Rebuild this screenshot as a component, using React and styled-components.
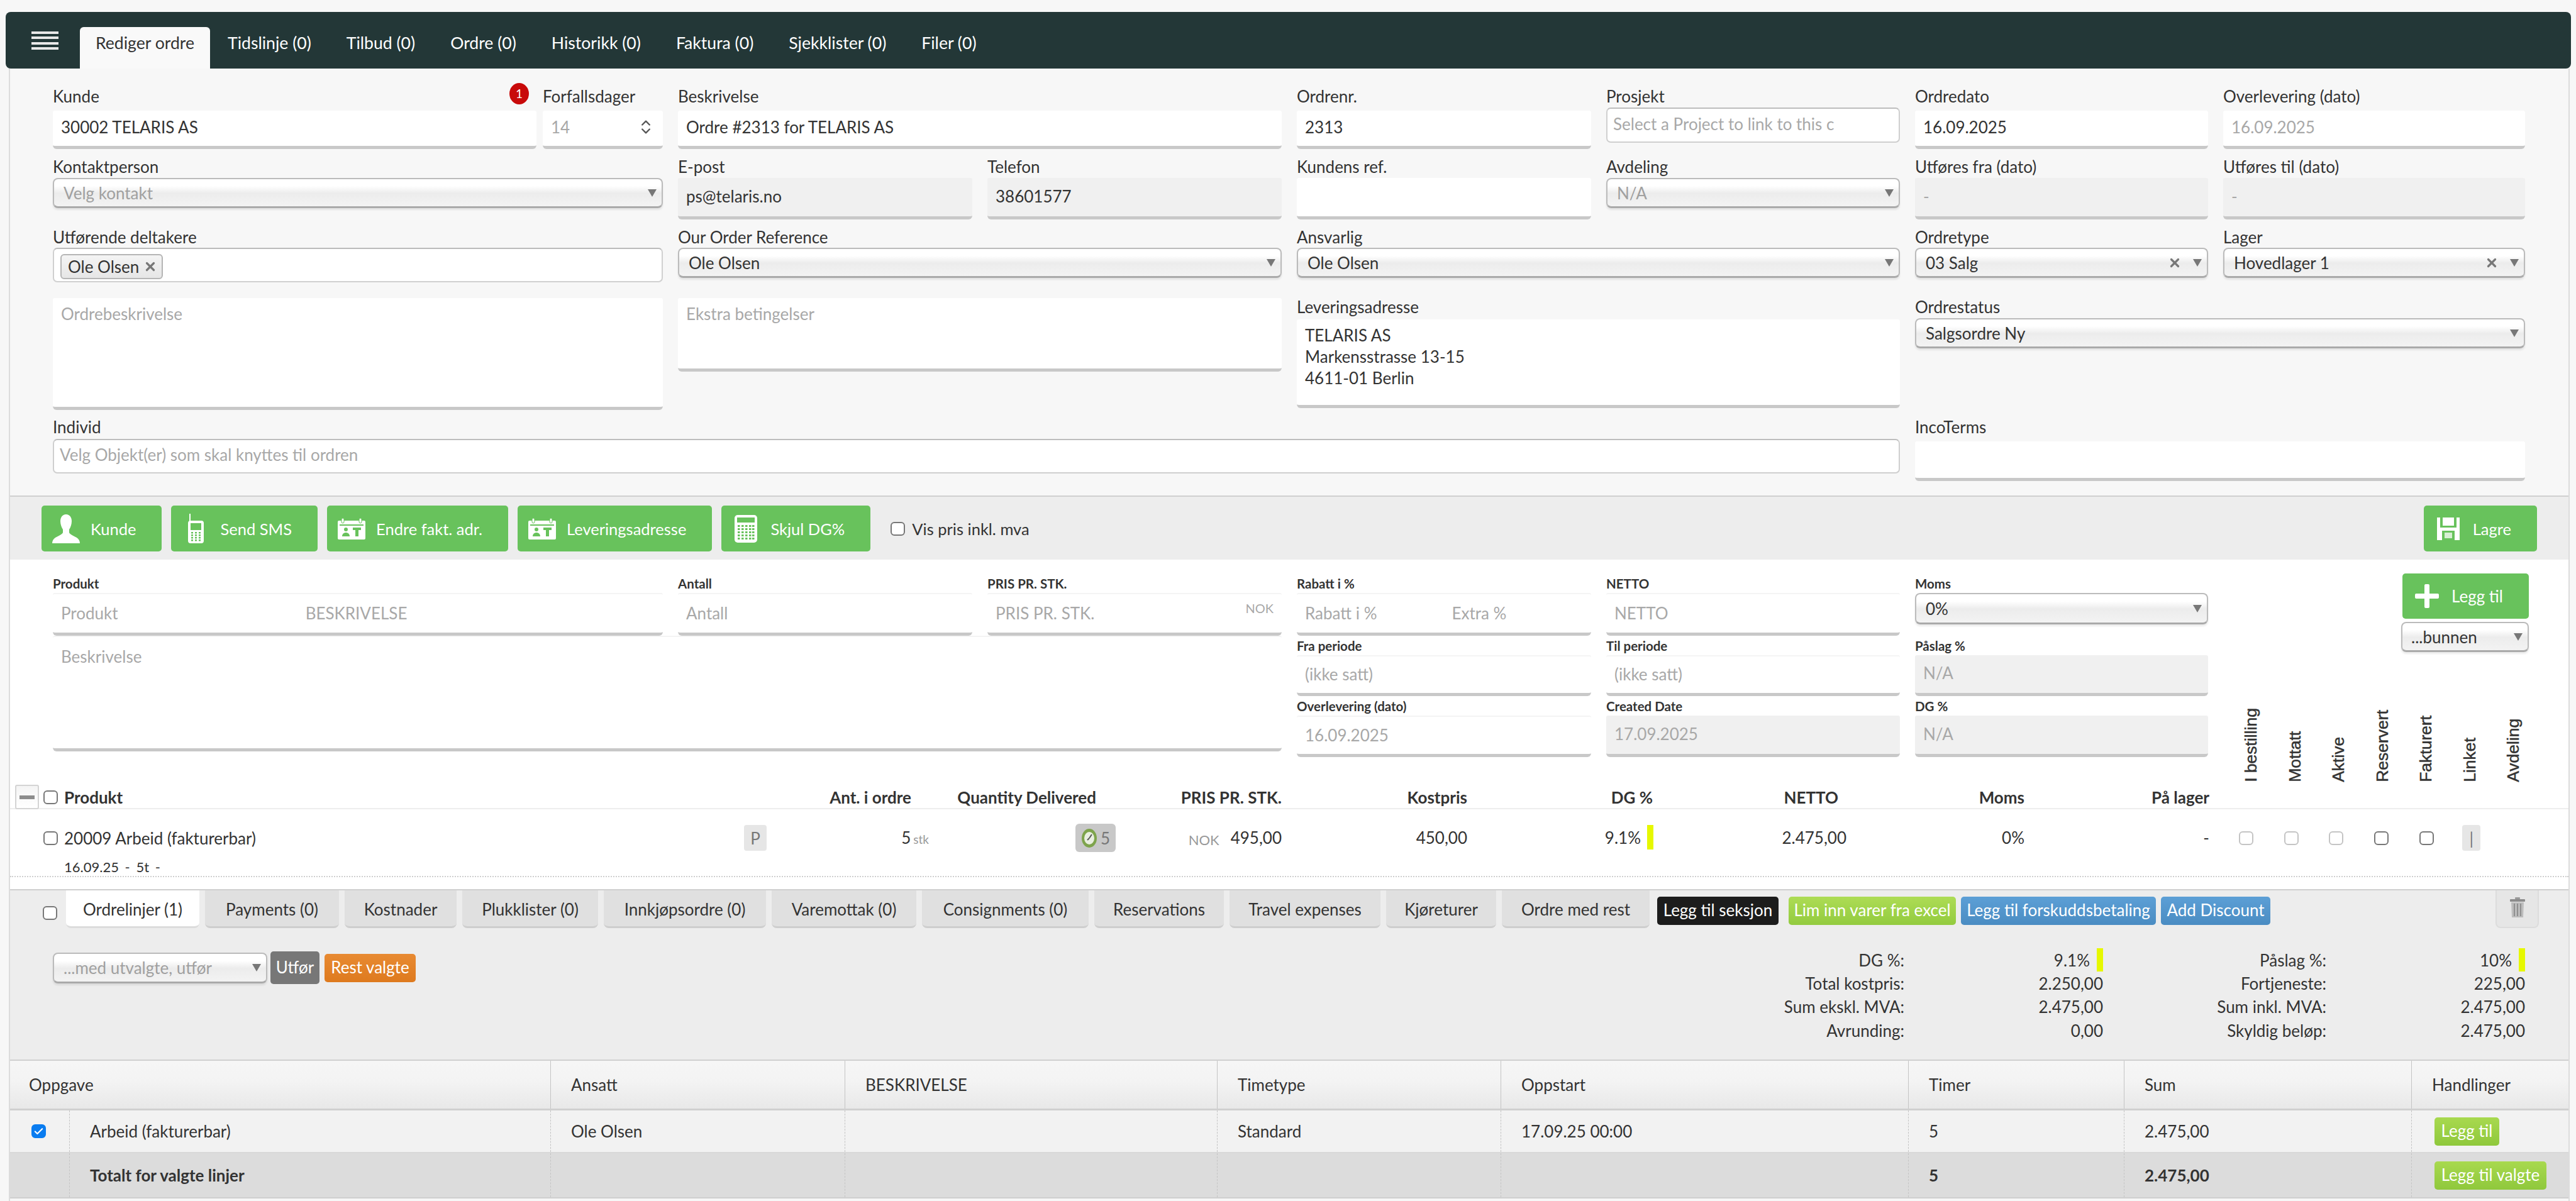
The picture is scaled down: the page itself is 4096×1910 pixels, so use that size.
import React from "react";
import styled, { createGlobalStyle } from "styled-components";
import { ChevronsUpDown, X, Check } from "lucide-react";

const GlobalStyle = createGlobalStyle`
  html, body {
    margin: 0;
    padding: 0;
    width: 4096px;
    height: 1910px;
    overflow: hidden;
    background: #f7f7f7;
    color: #333;
    font-family: Lato, "Open Sans", sans-serif;
    font-size: 26px;
  }
  * { box-sizing: border-box; }
`;

const COLUMNS = "473px 473px 468px 468px 468px 467px 466px 480px";
const GREEN = "#68c25c";

const Page = styled.div`
  width: 4096px;
  height: 1910px;
  padding-top: 19px;
  display: flex;
  flex-direction: column;
`;

/* top bar */
const TopBar = styled.div`
  margin: 0 8px 0 9px;
  height: 90px;
  background: #233737;
  border-radius: 8px;
  display: flex;
  align-items: flex-end;
  padding-left: 41px;
  position: relative;
  z-index: 1;
`;
const Burger = styled.div`
  width: 43px;
  height: 29px;
  margin: 0 34px 30px 0;
  display: flex;
  flex-direction: column;
  justify-content: space-between;
  span {
    display: block;
    height: 4px;
    background: #e8e8e8;
  }
`;
const TopTab = styled.div`
  height: 66px;
  line-height: 50px;
  font-size: 26.6px;
  padding: 0 ${(p) => (p.$active ? "25px" : "28px")};
  color: ${(p) => (p.$active ? "#333" : "#fff")};
  background: ${(p) => (p.$active ? "#f9f9f9" : "transparent")};
  border-radius: 6px 6px 0 0;
  white-space: nowrap;
`;

const Body = styled.div`
  margin: 0 10px 0 14px;
  flex: 1;
  border-left: 2px solid #dcdcdc;
  border-right: 2px solid #dcdcdc;
  display: flex;
  flex-direction: column;
`;

/* order form */
const FormGrid = styled.div`
  height: 681px;
  padding: 32px 0 0 68px;
  border-bottom: 2px solid #cfcfcf;
  display: grid;
  grid-template-columns: ${COLUMNS};
  grid-template-rows: 112px 112px 109px 193px 98px;
  column-gap: 24px;
`;
const Field = styled.div`
  grid-column: span ${(p) => p.$span || 1};
  display: flex;
  flex-direction: column;
  align-items: stretch;
  min-width: 0;
`;
const Label = styled.div`
  height: 24px;
  line-height: 24px;
  margin-bottom: ${(p) => p.$gap ?? 6}px;
  white-space: nowrap;
  display: flex;
  justify-content: space-between;
`;
const Badge = styled.span`
  width: 31px;
  height: 34px;
  margin: -9px 12px 0 0;
  border-radius: 50%;
  background: #c80a0a;
  color: #fff;
  font-size: 19px;
  line-height: 34px;
  text-align: center;
`;
const Input = styled.div`
  height: ${(p) => p.$h || 61}px;
  padding: 0 13px;
  line-height: ${(p) => (p.$h || 61) - 8}px;
  background: ${(p) => (p.$disabled ? "#f0f0f0" : "#fff")};
  color: ${(p) => (p.$muted ? "#a8a8a8" : "#333")};
  border-top: ${(p) => (p.$line ? "2px solid #f4f4f4" : "0")};
  border-bottom: 5px solid #c8c8c8;
  border-radius: 3px 3px 6px 6px;
  display: flex;
  justify-content: space-between;
  white-space: nowrap;
  position: relative;
`;
const TextArea = styled(Input)`
  height: ${(p) => p.$h}px;
  display: block;
  padding-top: 8px;
  line-height: 34px;
`;
const Outline = styled.div`
  height: ${(p) => p.$h || 56}px;
  line-height: ${(p) => (p.$h || 56) - 8}px;
  padding: 0 9px;
  background: #fff;
  color: #a8a8a8;
  border: 2px solid #cfcfcf;
  border-top-color: #bdbdbd;
  border-radius: 7px;
  white-space: nowrap;
  overflow: hidden;
`;
const Pair = styled.div`
  grid-column: span 2;
  display: flex;
  gap: 10px;
`;
const Select = styled.div`
  height: ${(p) => p.$h || 48}px;
  padding: 0 8px 0 15px;
  background: linear-gradient(#fff 0%, #fff 25%, #ececec 52%, #f3f3f3 100%);
  border: 2px solid #bbb;
  border-bottom: 3px solid #aaa;
  border-radius: 8px;
  box-shadow: 0 3px 3px rgba(0, 0, 0, 0.08);
  color: ${(p) => (p.$muted ? "#a0a0a0" : "#333")};
  display: flex;
  align-items: center;
  gap: 18px;
  white-space: nowrap;
  span:first-child {
    flex: 1;
  }
`;
const Arrow = styled.i`
  width: 0;
  height: 0;
  border-left: 7px solid transparent;
  border-right: 7px solid transparent;
  border-top: 12px solid #777;
  flex: none;
`;
const MultiBox = styled.div`
  height: 55px;
  padding: 8px 10px;
  background: #fff;
  border: 2px solid #d0d0d0;
  border-top-color: #bbb;
  border-radius: 7px;
`;
const Chip = styled.div`
  width: 163px;
  height: 40px;
  padding: 0 7px 0 10px;
  background: linear-gradient(#f4f4f4, #e6e6e6);
  border: 2px solid #b5b5b5;
  border-radius: 6px;
  display: flex;
  align-items: center;
  justify-content: space-between;
`;

/* green toolbar */
const Toolbar = styled.div`
  height: 100px;
  padding: 14px 50px 0 50px;
  background: #ededed;
  display: flex;
  gap: 15px;
  font-size: 25.5px;
`;
const GreenButton = styled.div`
  height: 73px;
  padding: 0 41px 0 17px;
  background: ${GREEN};
  border-radius: 5px;
  color: #fff;
  display: flex;
  align-items: center;
  gap: 17px;
  white-space: nowrap;
  flex: none;
`;
const IconBox = styled.div`
  width: 44px;
  display: flex;
  justify-content: center;
  flex: none;
`;
const CheckBox = styled.span`
  width: 23px;
  height: 22px;
  flex: none;
  display: inline-flex;
  align-items: center;
  justify-content: center;
  border: 2px solid ${(p) => (p.$on ? "#0a7cf0" : p.$light ? "#c4c4c4" : "#777")};
  border-radius: 6px;
  background: ${(p) => (p.$on ? "#0a7cf0" : "#fff")};
`;
const VatToggle = styled.div`
  margin-left: 17px;
  height: 73px;
  display: flex;
  align-items: center;
  gap: 11px;
  white-space: nowrap;
`;
const Push = styled.div`
  flex: 1;
`;

/* product entry */
const ProductSection = styled.div`
  flex: none;
  height: 524px;
  background: #fff;
  display: flex;
  flex-direction: column;
`;
const ProductGrid = styled.div`
  height: 358px;
  padding: 26px 0 4px 68px;
  display: grid;
  grid-template-columns: ${COLUMNS};
  grid-template-rows: 95px 92px 93px 36px;
  column-gap: 24px;
  row-gap: 4px;
`;
const SmallLabel = styled.div`
  height: 24px;
  margin-bottom: 3px;
  line-height: 24px;
  font-size: 20.5px;
  font-weight: 700;
  white-space: nowrap;
`;
const DescArea = styled(Input)`
  grid-column: 1 / span 4;
  grid-row: 2 / span 2;
  height: 184px;
  margin-top: -4px;
  padding-top: 14px;
  display: block;
  line-height: 34px;
`;
const SideCol = styled.div`
  grid-column: 8;
  grid-row: 1 / -1;
  margin-top: -4px;
  display: flex;
  flex-direction: column;
  align-items: flex-end;
`;
const SideSelect = styled(Select)`
  width: 203px;
  margin: 5px -6px 0 0;
  padding-left: 14px;
`;
const AddButton = styled(GreenButton)`
  margin-right: -6px;
  height: 72px;
`;
const RotatedRow = styled.div`
  margin-top: auto;
  align-self: stretch;
  margin-left: 9px;
  display: flex;
`;
const Rotated = styled.div`
  width: 69.5px;
  writing-mode: vertical-rl;
  transform: rotate(180deg);
  display: flex;
  align-items: center;
  justify-content: flex-start;
  font-family: "Liberation Sans", Arial, sans-serif;
  font-size: 26.5px;
  font-weight: 400;
  -webkit-text-stroke: 0.5px #333;
  line-height: 1;
  white-space: nowrap;
`;
const ProdSmall = styled.span`
  font-size: 20px;
`;
const Spread = styled.span`
  width: ${(p) => p.$w}px;
  display: inline-block;
`;

/* product lines */
const LineGrid = styled.div`
  display: grid;
  grid-template-columns: 1203px 262px 293px 264px 295px 296px 307px 283px 294px 1fr;
  height: ${(p) => p.$h}px;
  border-bottom: ${(p) => p.$border};
  font-weight: ${(p) => p.$weight || 400};
  flex: none;
`;
const LineCell = styled.div`
  display: flex;
  align-items: ${(p) => p.$align || "center"};
  justify-content: flex-end;
  padding-right: ${(p) => p.$pr || 0}px;
  padding-top: ${(p) => p.$pt || 0}px;
  gap: ${(p) => p.$gap || 0}px;
  white-space: nowrap;
`;
const LineHead = styled.div`
  display: flex;
  align-items: center;
  padding-left: 8px;
  gap: 7px;
`;
const Minus = styled.div`
  width: 38px;
  height: 39px;
  background: linear-gradient(#f4f4f4, #fff);
  border: 2px solid #d4d4d4;
  border-radius: 3px;
  display: flex;
  align-items: center;
  justify-content: center;
  &::after {
    content: "";
    width: 24px;
    height: 6px;
    background: #8c8c8c;
  }
`;
const LineMain = styled.div`
  padding: 25px 0 0 53px;
`;
const LineTop = styled.div`
  height: 41px;
  display: flex;
  align-items: center;
  gap: 10px;
`;
const GreyTag = styled.div`
  width: ${(p) => p.$w || 36}px;
  height: 41px;
  background: #e6e6e6;
  border-radius: 4px;
  color: #777;
  display: flex;
  align-items: center;
  justify-content: center;
  flex: none;
`;
const SubLine = styled.div`
  margin: 12px 0 0 33px;
  font-size: 22px;
  word-spacing: 4px;
`;
const Unit = styled.span`
  font-size: ${(p) => p.$size || 19}px;
  color: #999;
`;
const Delivered = styled.div`
  width: 64px;
  height: 45px;
  background: #c8c8c8;
  border-radius: 6px;
  color: #777;
  display: flex;
  align-items: center;
  justify-content: center;
  gap: 5px;
`;
const YellowBar = styled.i`
  width: 10px;
  height: ${(p) => p.$h || 39}px;
  background: #e6f800;
  flex: none;
`;
const CheckRow = styled.div`
  grid-column: 10;
  margin-left: 23px;
  display: flex;
  align-items: flex-start;
  padding-top: 25px;
`;
const CheckSlot = styled.div`
  width: 71.6px;
  height: 41px;
  display: flex;
  align-items: center;
  justify-content: center;
`;

/* lower panel */
const Lower = styled.div`
  flex: none;
  height: 271px;
  background: #ededed;
  border-top: 2px solid #cfcfcf;
  display: flex;
  flex-direction: column;
`;
const TabRow = styled.div`
  height: 60px;
  padding: 0 47px 0 52px;
  display: flex;
  align-items: flex-start;
  flex: none;
`;
const TabCheck = styled.div`
  width: 37px;
  padding-top: 21px;
`;
const Tab = styled.div`
  width: ${(p) => p.$w}px;
  height: 60px;
  margin-right: 9px;
  line-height: 60px;
  font-size: 26px;
  text-align: center;
  background: ${(p) => (p.$active ? "#fff" : "#e0e0e0")};
  border-bottom: 3px solid ${(p) => (p.$active ? "#dcdcdc" : "#cecece")};
  border-radius: 0 0 8px 8px;
  white-space: nowrap;
  flex: none;
`;
const FlatButton = styled.div`
  width: ${(p) => (p.$w ? `${p.$w}px` : "auto")};
  height: ${(p) => p.$h || 45}px;
  padding: 0 ${(p) => p.$px ?? 0}px;
  margin: ${(p) => p.$m || "0"};
  line-height: ${(p) => (p.$h || 45) - 2}px;
  text-align: center;
  background: ${(p) => p.$bg};
  color: #fff;
  border-radius: 5px;
  white-space: nowrap;
  flex: none;
`;
const TrashBox = styled.div`
  width: 69px;
  height: 60px;
  margin-left: auto;
  background: #e6e6e6;
  border: 2px solid #dcdcdc;
  border-top: 0;
  border-radius: 0 0 8px 8px;
  display: flex;
  justify-content: center;
  padding-top: 11px;
  flex: none;
`;
const ActionArea = styled.div`
  flex: 1;
  padding: 32px 69px 0 68px;
  display: flex;
  justify-content: space-between;
  align-items: flex-start;
`;
const ActionLeft = styled.div`
  display: flex;
  align-items: center;
  gap: 5px;
  margin-top: 5px;
`;
const Summary = styled.div`
  display: grid;
  grid-template-columns: 300px 316px 355px 316px;
  grid-auto-rows: 37.4px;
  align-items: center;
`;
const SumCell = styled.div`
  display: flex;
  justify-content: flex-end;
  align-items: center;
  gap: 11px;
  white-space: nowrap;
`;

/* time table */
const TimeRow = styled.div`
  display: grid;
  grid-template-columns: 95px 765px 468px 592px 451px 648px 343px 457px 1fr;
  height: ${(p) => p.$h}px;
  flex: none;
  background: ${(p) => p.$bg};
  border-top: ${(p) => p.$top || "0"};
  border-bottom: ${(p) => p.$bottom};
  font-weight: ${(p) => p.$weight || 400};
`;
const TimeCell = styled.div`
  grid-column: span ${(p) => p.$span || 1};
  display: flex;
  align-items: center;
  padding-left: ${(p) => p.$pl ?? 32}px;
  border-right: 1px ${(p) => p.$line || "dashed"} #c4c4c4;
  white-space: nowrap;
  &:last-child {
    border-right: 0;
  }
`;

const PersonIcon = () => (
  <svg width="44" height="46" viewBox="0 0 44 46" fill="#fff">
    <path d="M22 0c6 0 9 5 9 11 0 5-2 10-4 13v5c1 3 7 5 12 8 3 2 5 5 5 9H0c0-4 2-7 5-9 5-3 11-5 12-8v-5c-2-3-4-8-4-13 0-6 3-11 9-11z" />
  </svg>
);

const PhoneIcon = () => (
  <svg width="25" height="47" viewBox="0 0 25 47">
    <rect x="2" y="0" width="2" height="14" fill="#fff" />
    <rect x="0" y="11" width="25" height="36" rx="4" fill="#fff" />
    <rect x="4" y="15" width="17" height="11" fill={GREEN} />
    {[29, 33, 37, 41].map((y) =>
      [5, 11, 17].map((x) => <rect key={`${x}-${y}`} x={x} y={y} width="3" height="2.5" fill={GREEN} />)
    )}
  </svg>
);

const CalendarIcon = () => (
  <svg width="44" height="34" viewBox="0 0 44 34">
    <rect x="0" y="4" width="44" height="30" rx="2" fill="#fff" />
    <rect x="6" y="0" width="4" height="8" rx="2" fill="#fff" stroke={GREEN} />
    <rect x="34" y="0" width="4" height="8" rx="2" fill="#fff" stroke={GREEN} />
    <rect x="3" y="10" width="38" height="2" fill={GREEN} />
    <circle cx="13" cy="18" r="3" fill={GREEN} />
    <path d="M7 29c0-4 3-6 6-6s6 2 6 6z" fill={GREEN} />
    <rect x="24" y="15" width="13" height="4" fill={GREEN} />
    <rect x="28" y="19" width="5" height="10" fill={GREEN} />
  </svg>
);

const CalculatorIcon = () => (
  <svg width="36" height="44" viewBox="0 0 36 44">
    <rect x="0" y="0" width="36" height="44" rx="5" fill="#fff" />
    <rect x="4" y="4" width="28" height="8" fill={GREEN} />
    {[16, 21, 26, 31, 36].map((y) =>
      [5, 11, 17, 23, 28].map((x) => <rect key={`${x}-${y}`} x={x} y={y} width="3.5" height="3" fill={GREEN} />)
    )}
  </svg>
);

const FloppyIcon = () => (
  <svg width="36" height="36" viewBox="0 0 36 36">
    <path d="M0 0h36v36H0z" fill="#fff" />
    <rect x="5" y="0" width="4" height="13" fill={GREEN} />
    <rect x="27" y="0" width="4" height="13" fill={GREEN} />
    <rect x="5" y="13" width="26" height="3" fill={GREEN} />
    <rect x="8" y="21" width="20" height="15" fill={GREEN} />
    <rect x="12" y="24" width="12" height="9" fill="#d7efd3" />
  </svg>
);

const PlusIcon = () => (
  <svg width="38" height="38" viewBox="0 0 38 38" fill="#fff">
    <path d="M15 2a2 2 0 0 1 2-2h4a2 2 0 0 1 2 2v13h13a2 2 0 0 1 2 2v4a2 2 0 0 1-2 2H23v13a2 2 0 0 1-2 2h-4a2 2 0 0 1-2-2V23H2a2 2 0 0 1-2-2v-4a2 2 0 0 1 2-2h13z" />
  </svg>
);

const ClockIcon = () => (
  <svg width="26" height="32" viewBox="0 0 26 32">
    <ellipse cx="13" cy="16" rx="12" ry="15" fill="#7ea44c" />
    <ellipse cx="13" cy="16" rx="8" ry="10" fill="#e9efe0" />
    <path d="M13 16l4-6" stroke="#555" strokeWidth="2" />
    <path d="M13 16l-3 3" stroke="#555" strokeWidth="2" />
  </svg>
);

const TrashIcon = () => (
  <svg width="26" height="32" viewBox="0 0 26 32">
    <rect x="9" y="0" width="8" height="3" rx="1" fill="#999" />
    <rect x="1" y="3" width="24" height="4" rx="1" fill="#8c8c8c" />
    <path d="M3 8h20l-1 24H4z" fill="#bdbdbd" />
    <path d="M8 10v20M13 10v20M18 10v20" stroke="#8f8f8f" strokeWidth="2" />
  </svg>
);

const CloseMark = () => <X size={22} strokeWidth={3.5} color="#777" />;

const toolbarButtons = [
  { text: "Kunde", icon: <PersonIcon /> },
  { text: "Send SMS", icon: <PhoneIcon /> },
  { text: "Endre fakt. adr.", icon: <CalendarIcon /> },
  { text: "Leveringsadresse", icon: <CalendarIcon /> },
  { text: "Skjul DG%", icon: <CalculatorIcon /> },
];

const topTabs = ["Tidslinje (0)", "Tilbud (0)", "Ordre (0)", "Historikk (0)", "Faktura (0)", "Sjekklister (0)", "Filer (0)"];
const lowerTabs = [
  { text: "Payments (0)", w: 213 },
  { text: "Kostnader", w: 178 },
  { text: "Plukklister (0)", w: 216 },
  { text: "Innkjøpsordre (0)", w: 258 },
  { text: "Varemottak (0)", w: 230 },
  { text: "Consignments (0)", w: 265 },
  { text: "Reservations", w: 206 },
  { text: "Travel expenses", w: 240 },
  { text: "Kjøreturer", w: 175 },
  { text: "Ordre med rest", w: 235 },
];
const rotatedHeads = ["I bestilling", "Mottatt", "Aktive", "Reservert", "Fakturert", "Linket", "Avdeling"];
const timeHeads = ["Ansatt", "BESKRIVELSE", "Timetype", "Oppstart", "Timer", "Sum", "Handlinger"];

const OrderForm = () => (
  <FormGrid>
    <Pair>
      <Field style={{ width: 769 }}>
        <Label $gap={11}>
          Kunde
          <Badge>1</Badge>
        </Label>
        <Input>30002 TELARIS AS</Input>
      </Field>
      <Field style={{ flex: 1 }}>
        <Label $gap={11}>Forfallsdager</Label>
        <Input $muted>
          14
          <ChevronsUpDown size={28} color="#555" style={{ marginTop: 12 }} />
        </Input>
      </Field>
    </Pair>
    <Field $span={2}>
      <Label $gap={11}>Beskrivelse</Label>
      <Input>Ordre #2313 for TELARIS AS</Input>
    </Field>
    <Field>
      <Label $gap={11}>Ordrenr.</Label>
      <Input>2313</Input>
    </Field>
    <Field>
      <Label>Prosjekt</Label>
      <Outline>Select a Project to link to this c</Outline>
    </Field>
    <Field>
      <Label $gap={11}>Ordredato</Label>
      <Input>16.09.2025</Input>
    </Field>
    <Field>
      <Label $gap={11}>Overlevering (dato)</Label>
      <Input $muted>16.09.2025</Input>
    </Field>

    <Field $span={2}>
      <Label>Kontaktperson</Label>
      <Select $muted>
        <span>Velg kontakt</span>
        <Arrow />
      </Select>
    </Field>
    <Field>
      <Label>E-post</Label>
      <Input $h={66} $disabled>ps@telaris.no</Input>
    </Field>
    <Field>
      <Label>Telefon</Label>
      <Input $h={66} $disabled>38601577</Input>
    </Field>
    <Field>
      <Label>Kundens ref.</Label>
      <Input $h={66} />
    </Field>
    <Field>
      <Label>Avdeling</Label>
      <Select $muted>
        <span>N/A</span>
        <Arrow />
      </Select>
    </Field>
    <Field>
      <Label>Utføres fra (dato)</Label>
      <Input $h={66} $disabled $muted>-</Input>
    </Field>
    <Field>
      <Label>Utføres til (dato)</Label>
      <Input $h={66} $disabled $muted>-</Input>
    </Field>

    <Field $span={2}>
      <Label $gap={5}>Utførende deltakere</Label>
      <MultiBox>
        <Chip>
          Ole Olsen
          <CloseMark />
        </Chip>
      </MultiBox>
    </Field>
    <Field $span={2}>
      <Label $gap={5}>Our Order Reference</Label>
      <Select>
        <span>Ole Olsen</span>
        <Arrow />
      </Select>
    </Field>
    <Field $span={2}>
      <Label $gap={5}>Ansvarlig</Label>
      <Select>
        <span>Ole Olsen</span>
        <Arrow />
      </Select>
    </Field>
    <Field>
      <Label $gap={5}>Ordretype</Label>
      <Select>
        <span>03 Salg</span>
        <CloseMark />
        <Arrow />
      </Select>
    </Field>
    <Field>
      <Label $gap={5}>Lager</Label>
      <Select>
        <span>Hovedlager 1</span>
        <CloseMark />
        <Arrow />
      </Select>
    </Field>

    <Field $span={2}>
      <TextArea $h={178} $muted>Ordrebeskrivelse</TextArea>
    </Field>
    <Field $span={2}>
      <TextArea $h={117} $muted>Ekstra betingelser</TextArea>
    </Field>
    <Field $span={2}>
      <Label style={{ marginTop: 2 }} $gap={8}>Leveringsadresse</Label>
      <TextArea $h={141}>
        TELARIS AS
        <br />
        Markensstrasse 13-15
        <br />
        4611-01 Berlin
      </TextArea>
    </Field>
    <Field $span={2}>
      <Label style={{ marginTop: 2 }} $gap={6}>Ordrestatus</Label>
      <Select>
        <span>Salgsordre Ny</span>
        <Arrow />
      </Select>
    </Field>

    <Field $span={6}>
      <Label $gap={7}>Individ</Label>
      <Outline $h={55}>Velg Objekt(er) som skal knyttes til ordren</Outline>
    </Field>
    <Field $span={2}>
      <Label $gap={11}>IncoTerms</Label>
      <Input $h={63} />
    </Field>
  </FormGrid>
);

const ProductForm = () => (
  <ProductGrid>
    <Field $span={2}>
      <SmallLabel>Produkt</SmallLabel>
      <Input $h={68} $muted $line>
        <span>
          Produkt
          <Spread $w={298} />
          BESKRIVELSE
        </span>
      </Input>
    </Field>
    <Field>
      <SmallLabel>Antall</SmallLabel>
      <Input $h={68} $muted $line>Antall</Input>
    </Field>
    <Field>
      <SmallLabel>PRIS PR. STK.</SmallLabel>
      <Input $h={68} $muted $line>
        PRIS PR. STK.
        <ProdSmall style={{ marginTop: -8 }}>NOK</ProdSmall>
      </Input>
    </Field>
    <Field>
      <SmallLabel>Rabatt i %</SmallLabel>
      <Input $h={68} $muted $line>
        <span>
          Rabatt i %
          <Spread $w={119} />
          Extra %
        </span>
      </Input>
    </Field>
    <Field>
      <SmallLabel>NETTO</SmallLabel>
      <Input $h={68} $muted $line>NETTO</Input>
    </Field>
    <Field>
      <SmallLabel>Moms</SmallLabel>
      <Select $h={50}>
        <span>0%</span>
        <Arrow />
      </Select>
    </Field>
    <SideCol>
      <AddButton>
        <IconBox>
          <PlusIcon />
        </IconBox>
        Legg til
      </AddButton>
      <SideSelect>
        <span>...bunnen</span>
        <Arrow />
      </SideSelect>
      <RotatedRow>
        {rotatedHeads.map((h) => (
          <Rotated key={h}>{h}</Rotated>
        ))}
      </RotatedRow>
    </SideCol>

    <DescArea $muted $line>Beskrivelse</DescArea>
    <Field style={{ gridColumn: 5, gridRow: 2 }}>
      <SmallLabel>Fra periode</SmallLabel>
      <Input $h={65} $muted $line>(ikke satt)</Input>
    </Field>
    <Field style={{ gridColumn: 6, gridRow: 2 }}>
      <SmallLabel>Til periode</SmallLabel>
      <Input $h={65} $muted $line>(ikke satt)</Input>
    </Field>
    <Field style={{ gridColumn: 7, gridRow: 2 }}>
      <SmallLabel>Påslag %</SmallLabel>
      <Input $h={65} $muted $disabled>N/A</Input>
    </Field>
    <Field style={{ gridColumn: 5, gridRow: 3 }}>
      <SmallLabel>Overlevering (dato)</SmallLabel>
      <Input $h={67} $muted $line>16.09.2025</Input>
    </Field>
    <Field style={{ gridColumn: 6, gridRow: 3 }}>
      <SmallLabel>Created Date</SmallLabel>
      <Input $h={67} $muted $disabled>17.09.2025</Input>
    </Field>
    <Field style={{ gridColumn: 7, gridRow: 3 }}>
      <SmallLabel>DG %</SmallLabel>
      <Input $h={67} $muted $disabled>N/A</Input>
    </Field>
  </ProductGrid>
);

const ProductLines = () => (
  <>
    <LineGrid $h={39} $border="2px solid #eee" $weight={700}>
      <LineHead>
        <Minus />
        <CheckBox />
        <span style={{ marginLeft: 3 }}>Produkt</span>
      </LineHead>
      <LineCell $pr={32}>Ant. i ordre</LineCell>
      <LineCell $pr={31}>Quantity Delivered</LineCell>
      <LineCell>PRIS PR. STK.</LineCell>
      <LineCell>Kostpris</LineCell>
      <LineCell $pr={1}>DG %</LineCell>
      <LineCell $pr={13}>NETTO</LineCell>
      <LineCell>Moms</LineCell>
      <LineCell>På lager</LineCell>
    </LineGrid>
    <LineGrid $h={108} $border="2px dotted #cfcfcf">
      <LineMain>
        <LineTop>
          <CheckBox />
          <span style={{ flex: 1 }}>20009 Arbeid (fakturerbar)</span>
          <GreyTag>P</GreyTag>
        </LineTop>
        <SubLine>16.09.25 - 5t -</SubLine>
      </LineMain>
      <LineCell $align="flex-start" $pt={25} $pr={4} $gap={4}>
        <span style={{ lineHeight: "41px" }}>5</span>
        <Unit style={{ lineHeight: "45px" }}>stk</Unit>
      </LineCell>
      <LineCell $align="flex-start" $pt={23}>
        <Delivered>
          <ClockIcon />5
        </Delivered>
      </LineCell>
      <LineCell $align="flex-start" $pt={25} $gap={18}>
        <Unit $size={22} style={{ lineHeight: "47px" }}>NOK</Unit>
        <span style={{ lineHeight: "41px" }}>495,00</span>
      </LineCell>
      <LineCell $align="flex-start" $pt={25}>
        <span style={{ lineHeight: "41px" }}>450,00</span>
      </LineCell>
      <LineCell $align="flex-start" $pt={25} $gap={10}>
        <span style={{ lineHeight: "41px" }}>9.1%</span>
        <YellowBar />
      </LineCell>
      <LineCell $align="flex-start" $pt={25}>
        <span style={{ lineHeight: "41px" }}>2.475,00</span>
      </LineCell>
      <LineCell $align="flex-start" $pt={25}>
        <span style={{ lineHeight: "41px" }}>0%</span>
      </LineCell>
      <LineCell $align="flex-start" $pt={25}>
        <span style={{ lineHeight: "41px" }}>-</span>
      </LineCell>
      <CheckRow>
        <CheckSlot><CheckBox $light /></CheckSlot>
        <CheckSlot><CheckBox $light /></CheckSlot>
        <CheckSlot><CheckBox $light /></CheckSlot>
        <CheckSlot><CheckBox /></CheckSlot>
        <CheckSlot><CheckBox /></CheckSlot>
        <CheckSlot><GreyTag $w={29}>|</GreyTag></CheckSlot>
      </CheckRow>
    </LineGrid>
  </>
);

const SumRow = ({ label, value, bar, label2, value2, bar2 }) => (
  <>
    <SumCell>{label}</SumCell>
    <SumCell>
      {value}
      {bar && <YellowBar $h={37} />}
    </SumCell>
    <SumCell>{label2}</SumCell>
    <SumCell>
      {value2}
      {bar2 && <YellowBar $h={37} />}
    </SumCell>
  </>
);

const LowerPanel = () => (
  <Lower>
    <TabRow>
      <TabCheck>
        <CheckBox />
      </TabCheck>
      <Tab $active $w={212}>Ordrelinjer (1)</Tab>
      {lowerTabs.map((t) => (
        <Tab key={t.text} $w={t.w}>{t.text}</Tab>
      ))}
      <FlatButton $bg="#1c1c1c" $w={193} $m="10px 16px 0 3px">Legg til seksjon</FlatButton>
      <FlatButton $bg="linear-gradient(#addc55, #93cb3f)" $w={266} $m="10px 8px 0 0">Lim inn varer fra excel</FlatButton>
      <FlatButton $bg="linear-gradient(#5c9fd6, #4a8cc2)" $w={310} $m="10px 8px 0 0">Legg til forskuddsbetaling</FlatButton>
      <FlatButton $bg="linear-gradient(#5c9fd6, #4a8cc2)" $w={174} $m="10px 0 0 0">Add Discount</FlatButton>
      <TrashBox>
        <TrashIcon />
      </TrashBox>
    </TabRow>
    <ActionArea>
      <ActionLeft>
        <Select $h={49} $muted style={{ width: 341 }}>
          <span>...med utvalgte, utfør</span>
          <Arrow />
        </Select>
        <FlatButton $bg="#777" $h={52} $w={78}>Utfør</FlatButton>
        <FlatButton $bg="linear-gradient(#e88a32, #de7a1e)" $w={145} style={{ marginLeft: 3 }}>Rest valgte</FlatButton>
      </ActionLeft>
      <Summary>
        <SumRow label="DG %:" value="9.1%" bar label2="Påslag %:" value2="10%" bar2 />
        <SumRow label="Total kostpris:" value="2.250,00" label2="Fortjeneste:" value2="225,00" />
        <SumRow label="Sum ekskl. MVA:" value="2.475,00" label2="Sum inkl. MVA:" value2="2.475,00" />
        <SumRow label="Avrunding:" value="0,00" label2="Skyldig beløp:" value2="2.475,00" />
      </Summary>
    </ActionArea>
  </Lower>
);

const TimeTable = () => (
  <>
    <TimeRow
      $h={81}
      $bg="linear-gradient(#f6f6f6 0%, #f3f3f3 45%, #e8e8e8 100%)"
      $top="2px solid #d0d0d0"
      $bottom="3px solid #d0d0d0"
    >
      <TimeCell $span={2} $line="solid" $pl={30}>Oppgave</TimeCell>
      {timeHeads.map((h) => (
        <TimeCell key={h} $line="solid">{h}</TimeCell>
      ))}
    </TimeRow>
    <TimeRow $h={68} $bg="#f2f2f2" $bottom="2px solid #d8d8d8">
      <TimeCell $pl={34}>
        <CheckBox $on>
          <Check size={17} strokeWidth={3} color="#fff" />
        </CheckBox>
      </TimeCell>
      <TimeCell>Arbeid (fakturerbar)</TimeCell>
      <TimeCell>Ole Olsen</TimeCell>
      <TimeCell />
      <TimeCell>Standard</TimeCell>
      <TimeCell>17.09.25 00:00</TimeCell>
      <TimeCell>5</TimeCell>
      <TimeCell>2.475,00</TimeCell>
      <TimeCell $pl={36}>
        <FlatButton $bg="linear-gradient(#a8d94f, #8fc83c)" $w={103}>Legg til</FlatButton>
      </TimeCell>
    </TimeRow>
    <TimeRow $h={72} $bg="#dcdcdc" $bottom="2px solid #cfcfcf" $weight={700}>
      <TimeCell />
      <TimeCell>Totalt for valgte linjer</TimeCell>
      <TimeCell />
      <TimeCell />
      <TimeCell />
      <TimeCell />
      <TimeCell>5</TimeCell>
      <TimeCell>2.475,00</TimeCell>
      <TimeCell $pl={36}>
        <FlatButton $bg="linear-gradient(#a8d94f, #8fc83c)" $w={178} style={{ fontWeight: 400 }}>Legg til valgte</FlatButton>
      </TimeCell>
    </TimeRow>
  </>
);

export default function App() {
  return (
    <>
      <GlobalStyle />
      <Page>
        <TopBar>
          <Burger>
            <span />
            <span />
            <span />
            <span />
          </Burger>
          <TopTab $active>Rediger ordre</TopTab>
          {topTabs.map((t) => (
            <TopTab key={t}>{t}</TopTab>
          ))}
        </TopBar>
        <Body>
          <OrderForm />
          <Toolbar>
            {toolbarButtons.map((b) => (
              <GreenButton key={b.text}>
                <IconBox>{b.icon}</IconBox>
                {b.text}
              </GreenButton>
            ))}
            <VatToggle>
              <CheckBox />
              Vis pris inkl. mva
            </VatToggle>
            <Push />
            <GreenButton>
              <IconBox>
                <FloppyIcon />
              </IconBox>
              Lagre
            </GreenButton>
          </Toolbar>
          <ProductSection>
            <ProductForm />
            <ProductLines />
          </ProductSection>
          <LowerPanel />
          <TimeTable />
        </Body>
      </Page>
    </>
  );
}
